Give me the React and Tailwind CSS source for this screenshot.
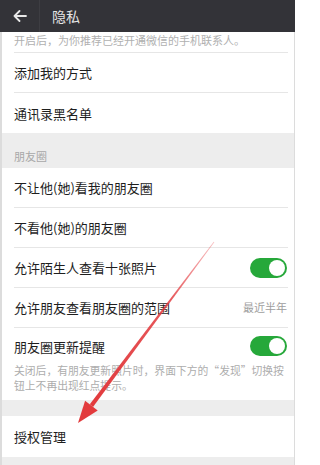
import React from "react";

const font = { fontFamily: '"Noto Sans CJK SC", "Noto Sans", sans-serif' };

function Toggle() {
  return (
    <div className="w-[37px] h-[20px] rounded-full bg-[#26a83a] flex items-center justify-end pr-[2px]">
      <div className="w-[16px] h-[16px] rounded-full bg-white" />
    </div>
  );
}

function Row({ label, right, divider = true }) {
  return (
    <div className="h-10 flex flex-col">
      <div className="flex-1 flex items-center justify-between pl-3 pr-[7px]">
        <span className="text-[13px] text-[#1e1e1e] leading-none">{label}</span>
        {right}
      </div>
      {divider && <div className="h-px bg-[#e6e6e6] ml-3 mr-[6px]" />}
    </div>
  );
}

export default function App() {
  return (
    <div className="w-[295px] h-[465px] overflow-hidden relative bg-[#ededed]" style={font}>
      <div className="h-8 bg-[#333338] flex items-center">
        <div className="w-[40px] h-full flex items-center justify-center border-r border-[#3d3d42]">
          <svg width="14" height="12" viewBox="0 0 14 12" fill="none" stroke="#e8e8e8" strokeWidth="1.8" strokeLinecap="round" strokeLinejoin="round">
            <path d="M13 6H1.5M6.5 1L1.5 6l5 5" />
          </svg>
        </div>
        <span className="ml-3 text-[14px] text-[#e4e4e4] leading-none">隐私</span>
      </div>
      <div className="border-l-2 border-r border-[#dcdcdc] h-[433px] flex flex-col">
        <div className="bg-white">
          <div className="h-5 flex items-center pl-3">
            <span className="text-[11px] text-[#b0b0b0] leading-none mt-[-3px]">开启后，为你推荐已经开通微信的手机联系人。</span>
          </div>
          <div className="h-px bg-[#e6e6e6] ml-3 mr-[6px]" />
          <Row label="添加我的方式" />
          <Row label="通讯录黑名单" divider={false} />
        </div>
        <div className="h-[35px] flex items-center pl-3 pt-[11px]">
          <span className="text-[11px] text-[#a8a8a8] leading-none">朋友圈</span>
        </div>
        <div className="bg-white">
          <Row label="不让他(她)看我的朋友圈" />
          <Row label="不看他(她)的朋友圈" />
          <Row label="允许陌生人查看十张照片" right={<Toggle />} />
          <Row label="允许朋友查看朋友圈的范围" right={<span className="text-[11px] text-[#9e9e9e] leading-none">最近半年</span>} />
          <div className="pb-[7px]">
            <div className="h-[35px] flex items-center justify-between pl-3 pr-[7px] pt-[1px]">
              <span className="text-[13px] text-[#1e1e1e] leading-none">朋友圈更新提醒</span>
              <Toggle />
            </div>
            <p className="pl-3 text-[10.8px] leading-[15px] text-[#adadad] whitespace-nowrap">
              关闭后，有朋友更新照片时，界面下方的“发现”切换按
              <br />
              钮上不再出现红点提示。
            </p>
          </div>
        </div>
        <div className="h-[16px]" />
        <div className="bg-white h-[41px] flex items-center pl-3">
          <span className="text-[13px] text-[#1e1e1e] leading-none">授权管理</span>
        </div>
      </div>
      <svg className="absolute left-0 top-0 pointer-events-none" width="295" height="465" viewBox="0 0 295 465">
        <defs>
          <linearGradient id="g" x1="214" y1="242" x2="91" y2="406" gradientUnits="userSpaceOnUse">
            <stop offset="0" stopColor="#e8454a" stopOpacity="0.35" />
            <stop offset="0.35" stopColor="#e23c40" stopOpacity="0.85" />
            <stop offset="1" stopColor="#e23a3c" stopOpacity="1" />
          </linearGradient>
        </defs>
        <polygon points="214.3,242.2 213.7,241.8 89.8,404.3 93.0,406.9" fill="url(#g)" />
        <polygon points="78,423 85.1,400.7 97.7,410.5" fill="#e23a3c" />
      </svg>
    </div>
  );
}
